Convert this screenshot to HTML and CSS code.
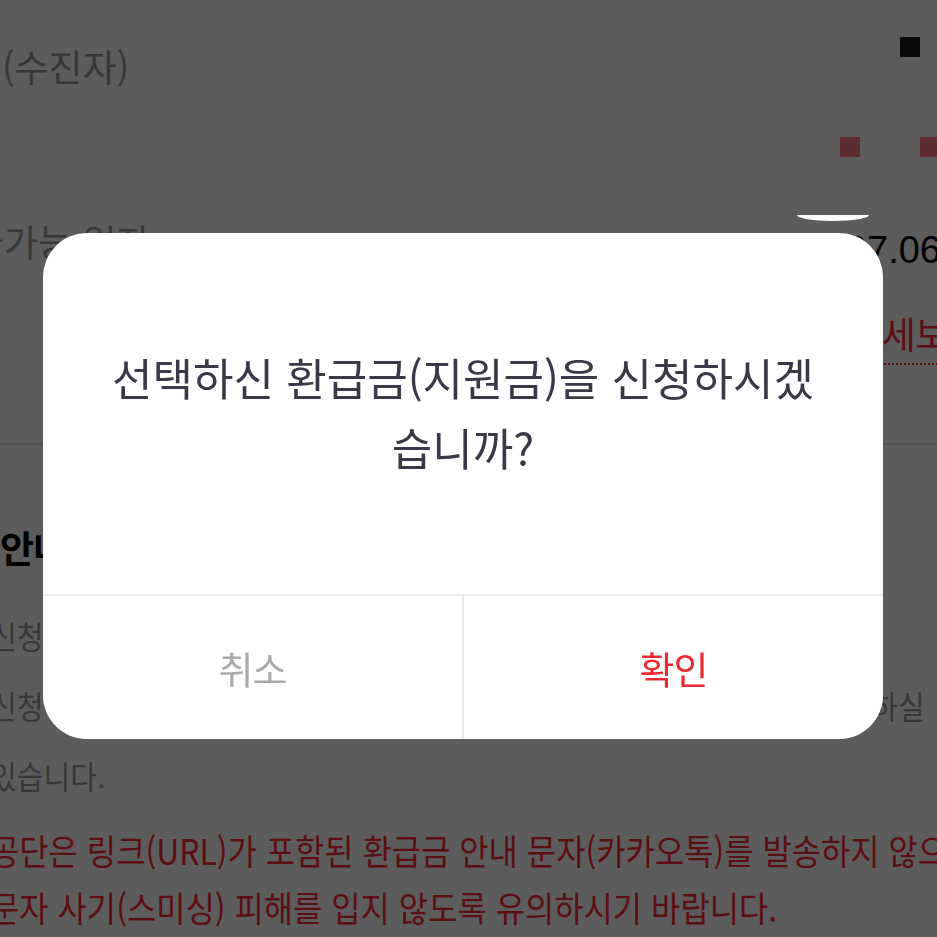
FILE: index.html
```html
<!DOCTYPE html>
<html lang="ko">
<head>
  <meta charset="UTF-8">
  <meta name="viewport" content="width=device-width, initial-scale=1.0">
  <title>환급금 신청</title>
  <link rel="stylesheet" href="styles.css">
</head>
<body>

  <!-- Page behind the dialog -->
  <main class="page">
    <div class="row row-name">
      <span class="label">(수진자)</span>
      <span class="mark mark-dark"></span>
    </div>

    <div class="row row-bank">
      <span class="label label-cut">예금주</span>
      <span class="marks">
        <span class="mark mark-red"></span>
        <span class="mark mark-red"></span>
      </span>
    </div>

    <div class="row row-date">
      <span class="label label-shift">급가능 일자</span>
      <span class="value">2023.07.06</span>
    </div>

    <div class="row row-link">
      <span class="detail-link">상세보기</span>
    </div>

    <hr class="divider">

    <section class="notice">
      <h2 class="notice-title">안내사항</h2>
      <p class="notice-line"><span class="cut-left">신청기간</span></p>
      <p class="notice-line">
        <span class="cut-left">신청하신</span>
        <span class="tail">확인하실</span>
      </p>
      <p class="notice-line"><span class="cut-left">있습니다.</span></p>
      <p class="warn-line warn-first"><span class="cut-left">공단은 링크(URL)가 포함된 환급금 안내 문자(카카오톡)를 발송하지 않으니</span></p>
      <p class="warn-line"><span class="cut-left">문자 사기(스미싱) 피해를 입지 않도록 유의하시기 바랍니다.</span></p>
    </section>
  </main>

  <!-- Dim layer -->
  <div class="dim"></div>
  <span class="switch-edge"></span>

  <!-- Confirm dialog -->
  <div class="modal">
    <div class="modal-body">
      <p class="modal-msg">선택하신 환급금(지원금)을 신청하시겠습니까?</p>
    </div>
    <div class="modal-buttons">
      <button type="button" class="btn btn-cancel">취소</button>
      <button type="button" class="btn btn-ok">확인</button>
    </div>
  </div>

</body>
</html>
```

FILE: styles.css
```css
/* General Reset */
* {
  margin: 0;
  padding: 0;
  box-sizing: border-box;
}

body {
  width: 937px;
  height: 937px;
  overflow: hidden;
  background-color: #fff;
  font-family: "Noto Sans CJK KR", "Noto Sans", sans-serif;
  color: #999;
}

/* Page behind */
.page {
  width: 937px;
}

.row {
  display: flex;
  justify-content: space-between;
  align-items: flex-start;
}

.label {
  display: inline-block;
  font-size: 37px;
  line-height: 1;
  white-space: nowrap;
}

.row-name {
  height: 134px;
  padding-left: 2px;
}

.row-name .label {
  margin-top: 48px;
}

.mark {
  display: block;
  width: 20px;
  height: 20px;
}

.mark-dark {
  background: #1c1c1c;
  margin-top: 37px;
  margin-right: 17px;
}

.row-bank {
  height: 70px;
}

.label-cut {
  margin-left: -112px;
  margin-top: 2px;
}

.marks {
  display: flex;
  gap: 60px;
  margin-top: 3px;
  margin-right: -3px;
}

.mark-red {
  background: #ff7a7f;
}

.row-date {
  height: 86px;
}

.label-shift {
  margin-left: -30px;
  margin-top: 19px;
}

.value {
  font-family: "Liberation Sans", Arial, sans-serif;
  font-size: 38px;
  line-height: 1;
  color: #000;
  margin-top: 27px;
  margin-right: -4px;
}

.row-link {
  justify-content: flex-end;
  height: 153px;
}

.detail-link {
  font-size: 37px;
  line-height: 1.2;
  color: #ff2d35;
  padding-bottom: 8px;
  border-bottom: 2px dotted #ff2d35;
  margin-top: 21px;
  margin-right: -44px;
  letter-spacing: -1px;
}

.divider {
  border: none;
  border-top: 2px solid #e0e0e0;
}

.notice {
  padding-top: 84px;
}

.notice-title {
  font-size: 37px;
  font-weight: bold;
  color: #000;
  line-height: 1;
  height: 71px;
  letter-spacing: -1px;
}

.notice-line,
.warn-line {
  display: flex;
  justify-content: space-between;
  align-items: center;
  white-space: nowrap;
}

.notice-line {
  height: 70px;
  font-size: 32px;
}

.warn-line {
  height: 57px;
  font-size: 35px;
  color: #ff2a30;
}

.warn-first {
  margin-top: 11px;
}

.cut-left,
.tail {
  display: inline-block;
  line-height: 1;
  transform: scaleX(0.91);
}

.cut-left {
  transform-origin: left center;
  margin-left: -10px;
}

.tail {
  transform-origin: right center;
  margin-right: 12px;
}

/* Dim layer */
.dim {
  position: fixed;
  inset: 0;
  background: rgba(0, 0, 0, 0.64);
}

.switch-edge {
  position: fixed;
  left: 797px;
  top: 215px;
  width: 72px;
  height: 6px;
  background: #fff;
  border-radius: 0 0 50% 50% / 0 0 100% 100%;
}

/* Dialog */
.modal {
  position: fixed;
  left: 43px;
  top: 233px;
  width: 840px;
  height: 506px;
  background: #fff;
  border-radius: 44px;
  overflow: hidden;
  display: flex;
  flex-direction: column;
}

.modal-body {
  height: 361px;
  display: flex;
  align-items: center;
  justify-content: center;
  padding: 0 60px 4px;
}

.modal-msg {
  font-size: 44px;
  line-height: 70px;
  color: #393947;
  text-align: center;
}

.modal-buttons {
  flex: 1;
  display: flex;
  border-top: 2px solid #eeeeee;
}

.btn {
  flex: 1;
  background: #fff;
  border: none;
  font-family: inherit;
  font-size: 38px;
  letter-spacing: -1px;
  cursor: pointer;
}

.btn-cancel {
  color: #aaaaaa;
}

.btn-ok {
  color: #ea2a30;
  border-left: 2px solid #ebebeb;
}
```
